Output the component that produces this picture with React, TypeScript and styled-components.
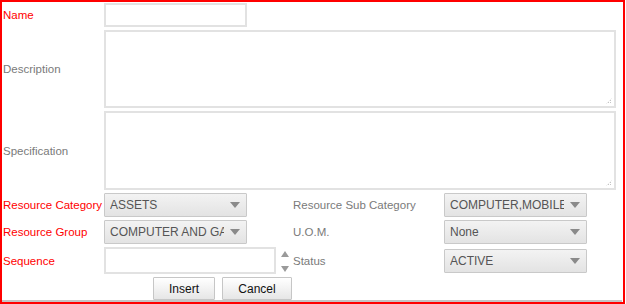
import styled, { createGlobalStyle } from 'styled-components';

const GlobalStyle = createGlobalStyle`
  html, body {
    margin: 0;
    padding: 0;
    background: #ffffff;
  }
  body {
    font-family: 'Liberation Sans', Arial, sans-serif;
    font-size: 11.5px;
  }
`;

const Frame = styled.div`
  box-sizing: border-box;
  width: 625px;
  height: 304px;
  border: 2px solid #ff0000;
  background: #fff;
`;

const Form = styled.form`
  box-sizing: border-box;
  width: 620px;
  height: 300px;
  padding: 1px 0 0 1px;
  border-bottom: 2px solid #c4c4c4;
  display: flex;
  flex-direction: column;
  gap: 3px;
`;

const Row = styled.div<{ $h: number }>`
  display: flex;
  align-items: center;
  height: ${(p) => p.$h}px;
`;

const Label = styled.label<{ $required?: boolean; $w?: number }>`
  flex: none;
  width: ${(p) => p.$w ?? 101}px;
  color: ${(p) => (p.$required ? '#ff0000' : '#7a7a7a')};
  font-size: 11.5px;
  white-space: nowrap;
`;

const TextInput = styled.input<{ $w: number; $h: number }>`
  box-sizing: border-box;
  width: ${(p) => p.$w}px;
  height: ${(p) => p.$h}px;
  margin: 0;
  padding: 2px 4px;
  border: 2px solid #e2e2e2;
  background: #fff;
  font-family: inherit;
  font-size: 11.5px;
  outline: none;
`;

const AreaWrap = styled.div`
  position: relative;
  display: flex;
`;

const TextArea = styled.textarea<{ $h: number }>`
  box-sizing: border-box;
  width: 512px;
  height: ${(p) => p.$h}px;
  margin: 0;
  padding: 3px;
  border: 2px solid #e2e2e2;
  resize: none;
  font-family: inherit;
  font-size: 11.5px;
  outline: none;
`;

const Grip = styled.span`
  position: absolute;
  right: 4px;
  bottom: 4px;
  width: 6px;
  height: 6px;
  background-image: linear-gradient(90deg, transparent 1px, #fff 1px),
    linear-gradient(transparent 1px, #fff 1px);
  background-color: #c4c4c4;
  background-size: 2px 2px;
  clip-path: polygon(100% 0, 100% 100%, 0 100%);
`;

const Select = styled.div<{ $gap?: number }>`
  box-sizing: border-box;
  flex: none;
  width: 143px;
  height: 24px;
  margin-right: ${(p) => p.$gap ?? 0}px;
  display: flex;
  align-items: center;
  padding: 0 6px 0 5px;
  border: 1px solid #c9c9c9;
  border-radius: 1px;
  background: linear-gradient(#f3f3f3, #e3e3e3);
  color: #555;
  font-size: 12px;
  overflow: hidden;
`;

const SelectText = styled.span`
  flex: 1;
  overflow: hidden;
  white-space: nowrap;
`;

const Arrow = styled.span`
  flex: none;
  margin-left: 6px;
  width: 0;
  height: 0;
  border-left: 5px solid transparent;
  border-right: 5px solid transparent;
  border-top: 6px solid #8a8a8a;
`;

const SeqCell = styled.div`
  flex: none;
  width: 189px;
  display: flex;
  align-items: center;
`;

const Spinner = styled.div`
  flex: none;
  width: 17px;
  height: 27px;
  display: flex;
  flex-direction: column;
  justify-content: space-between;
  align-items: center;
  padding: 4px 0 2px;
  box-sizing: border-box;
`;

const SpinArrow = styled.span<{ $up?: boolean }>`
  width: 0;
  height: 0;
  border-left: 4px solid transparent;
  border-right: 4px solid transparent;
  ${(p) => (p.$up ? 'border-bottom: 6px solid #9a9a9a;' : 'border-top: 6px solid #9a9a9a;')}
`;

const ButtonRow = styled.div`
  display: flex;
  gap: 7px;
  height: 23px;
  padding-left: 150px;
`;

const Button = styled.button<{ $w: number }>`
  box-sizing: border-box;
  width: ${(p) => p.$w}px;
  height: 23px;
  margin: 0;
  border: 1px solid #c6c6c6;
  border-radius: 1px;
  background: linear-gradient(#ffffff, #e6e6e6);
  color: #111;
  font-family: inherit;
  font-size: 12px;
  padding: 0;
`;

const SelectField = ({ value, gap }: { value: string; gap?: number }) => (
  <Select $gap={gap}>
    <SelectText>{value}</SelectText>
    <Arrow />
  </Select>
);

const App = () => {
  return (
    <>
      <GlobalStyle />
      <Frame>
        <Form onSubmit={(e) => e.preventDefault()}>
          <Row $h={24}>
            <Label $required>Name</Label>
            <TextInput $w={143} $h={24} />
          </Row>
          <Row $h={78}>
            <Label>Description</Label>
            <AreaWrap>
              <TextArea $h={78} />
              <Grip />
            </AreaWrap>
          </Row>
          <Row $h={79}>
            <Label>Specification</Label>
            <AreaWrap>
              <TextArea $h={79} />
              <Grip />
            </AreaWrap>
          </Row>
          <Row $h={24}>
            <Label $required>Resource Category</Label>
            <SelectField value="ASSETS" gap={46} />
            <Label $w={151}>Resource Sub Category</Label>
            <SelectField value="COMPUTER,MOBILE" />
          </Row>
          <Row $h={24}>
            <Label $required>Resource Group</Label>
            <SelectField value="COMPUTER AND GADGETS" gap={46} />
            <Label $w={151}>U.O.M.</Label>
            <SelectField value="None" />
          </Row>
          <Row $h={27}>
            <Label $required>Sequence</Label>
            <SeqCell>
              <TextInput $w={172} $h={27} />
              <Spinner>
                <SpinArrow $up />
                <SpinArrow />
              </Spinner>
            </SeqCell>
            <Label $w={151}>Status</Label>
            <SelectField value="ACTIVE" />
          </Row>
          <ButtonRow>
            <Button type="submit" $w={62}>Insert</Button>
            <Button type="button" $w={70}>Cancel</Button>
          </ButtonRow>
        </Form>
      </Frame>
    </>
  );
};

export default App;
